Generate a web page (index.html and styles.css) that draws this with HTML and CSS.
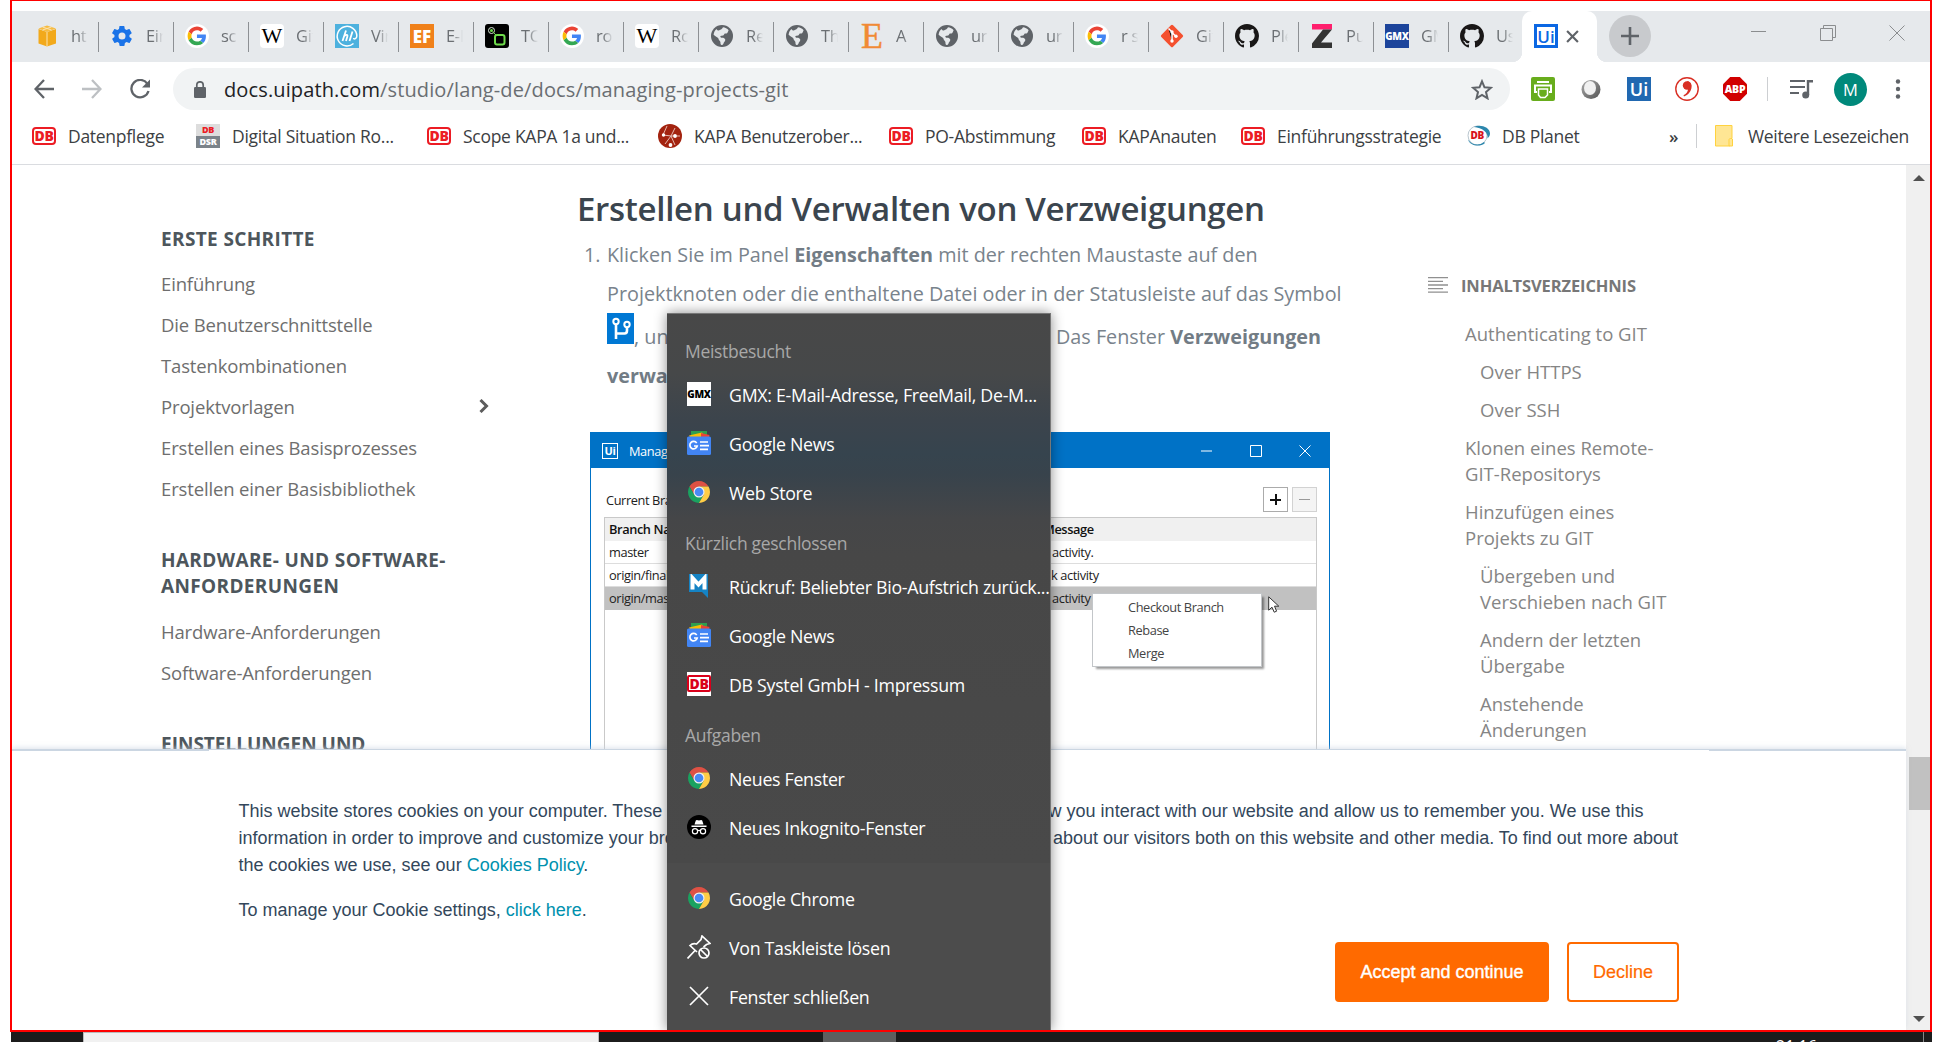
FILE: index.html
```html
<!DOCTYPE html>
<html lang="de">
<head>
<meta charset="utf-8">
<title>Erstellen und Verwalten von Verzweigungen</title>
<link rel="stylesheet" href="styles.css">
</head>
<body>
<svg class="defs" width="0" height="0" aria-hidden="true">
  <symbol id="google" viewBox="0 0 24 24"><ellipse cx="12" cy="12" rx="12" ry="12" fill="#fff"/><g transform="translate(2.6 2.6) scale(.39)"><path fill="#EA4335" d="M24 9.5c3.54 0 6.71 1.22 9.21 3.6l6.85-6.85C35.9 2.38 30.47 0 24 0 14.62 0 6.51 5.38 2.56 13.22l7.98 6.19C12.43 13.72 17.74 9.5 24 9.5z"/><path fill="#4285F4" d="M46.98 24.55c0-1.57-.15-3.09-.38-4.55H24v9.02h12.94c-.58 2.96-2.26 5.48-4.78 7.18l7.73 6c4.51-4.18 7.09-10.36 7.09-17.65z"/><path fill="#FBBC05" d="M10.53 28.59c-.48-1.45-.76-2.99-.76-4.59s.27-3.14.76-4.59l-7.98-6.19C.92 16.46 0 20.12 0 24c0 3.88.92 7.54 2.56 10.78l7.97-6.19z"/><path fill="#34A853" d="M24 48c6.48 0 11.93-2.13 15.89-5.81l-7.73-6c-2.15 1.45-4.92 2.3-8.16 2.3-6.26 0-11.57-4.22-13.47-9.91l-7.98 6.19C6.51 42.62 14.62 48 24 48z"/></g></symbol>
  <symbol id="globe" viewBox="0 0 24 24"><circle cx="12" cy="12" r="11" fill="#5f6368"/><path fill="#e6e9ec" d="M13 3.2c2 .2 4.300 1.200 5.600 3l-1 2.200c-.6 1.200-1.800.8-2.800 1.200-.8.4-.6 1.600-1.600 2-1 .3-2.200-.2-2.800.6-.5.9.6 1.500 1.700 1.500 1.500 0 3 .6 3.200 2.100.1 1.600-1.600 2.200-1.800 3.600-.1.700-.9 1.700-2 1.700-1.300-.200-.9-1.900-1.100-3-.2-1.300-1.800-1.900-1.900-3.300 0-1.200-2.200-1.800-4.900-4.100.2-2.600 1.500-4.600 3-5.800.4 1.300 1.500 1.900 2.700 1.300 1.200-.7 3.200-1.300 3.700-3z"/></symbol>
  <symbol id="github" viewBox="0 0 16 16"><path fill="#191717" d="M8 0C3.58 0 0 3.58 0 8c0 3.54 2.29 6.53 5.47 7.59.4.07.55-.17.55-.38 0-.19-.01-.82-.01-1.49-2.01.37-2.53-.49-2.69-.94-.09-.23-.48-.94-.82-1.13-.28-.15-.68-.52-.01-.53.63-.01 1.08.58 1.23.82.72 1.21 1.87.87 2.33.66.07-.52.28-.87.51-1.07-1.78-.2-3.64-.89-3.64-3.95 0-.87.31-1.59.82-2.15-.08-.2-.36-1.02.08-2.12 0 0 .67-.21 2.2.82.64-.18 1.32-.27 2-.27s1.36.09 2 .27c1.53-1.04 2.2-.82 2.2-.82.44 1.1.16 1.92.08 2.12.51.56.82 1.27.82 2.15 0 3.07-1.87 3.75-3.65 3.95.29.25.54.73.54 1.48 0 1.07-.01 1.93-.01 2.2 0 .21.15.46.55.38A8.01 8.01 0 0 0 16 8c0-4.42-3.58-8-8-8z"/></symbol>
  <symbol id="chrome" viewBox="0 0 48 48"><path fill="#de5144" d="M4.950 13A22 22 0 0 1 43.050 13H24L14.470 29.500z"/><path fill="#1aa260" d="M4.950 13L14.470 29.500 33.530 29.500 24 46A22 22 0 0 1 4.950 13z"/><path fill="#ffcd46" d="M43.050 13A22 22 0 0 1 24 46L33.530 29.500 24 13z"/><circle cx="24" cy="24" r="11" fill="#f1f1f1"/><circle cx="24" cy="24" r="8.700" fill="#4a8af5"/></symbol>
  <symbol id="news" viewBox="0 0 24 24"><path fill="#2f9e4f" d="M4 0h16v8H4z"/><path fill="#fbbc04" d="M2 4.500L15 1.500l3 5H3z"/><path fill="#ea4335" d="M14 2l8.500 2-1 4H14z"/><rect y="5.500" width="24" height="18.500" rx="1.500" fill="#4285f4"/><path d="M9.700 12.100A3.700 3.700 0 1 0 10.200 15H7" fill="none" stroke="#fff" stroke-width="1.700"/><path stroke="#fff" stroke-width="1.700" d="M13 11h8M13 14.700h9M13 18.400h8"/></symbol>
</svg>

<div class="frame">
  <header class="tabstrip">
    <div class="tab"><svg viewBox="0 0 24 24"><path fill="#f2a91b" d="M3.500 5v14.500L12 22.500l9-3V5L12 8z"/><path fill="#f7bc42" d="M3.500 4.500L12 1.500l9 3L12 8z"/><path stroke="#fbe3b0" fill="none" d="M7.500 3l9 3M16.500 3l-9 3M12 8v14.500"/></svg><span>ht</span></div>
    <div class="tab"><svg viewBox="0 0 24 24"><path fill="#1a73e8" d="M19.400 13c0-.3.100-.6.100-1s0-.7-.1-1l2.100-1.600c.2-.2.200-.4.100-.6l-2-3.500c-.1-.2-.4-.3-.6-.2l-2.500 1c-.5-.4-1.100-.7-1.700-1l-.4-2.600c0-.3-.2-.5-.5-.5h-4c-.3 0-.5.200-.5.400L9 5.100c-.6.200-1.200.6-1.700 1l-2.500-1c-.2-.1-.5 0-.6.200l-2 3.500c-.1.200-.1.500.1.600L4.500 11c0 .3-.1.700-.1 1s0 .7.100 1l-2.100 1.600c-.2.200-.2.400-.1.600l2 3.500c.1.200.4.300.6.200l2.500-1c.5.400 1.100.7 1.700 1l.4 2.600c0 .3.200.5.500.5h4c.3 0 .5-.2.500-.4l.4-2.700c.6-.2 1.200-.6 1.700-1l2.500 1c.2.100.5 0 .6-.2l2-3.500c.1-.2.100-.5-.1-.6zM12 15.500a3.500 3.500 0 1 1 0-7 3.500 3.500 0 0 1 0 7z"/></svg><span>Einf</span></div>
    <div class="tab"><svg><use href="#google"/></svg><span>sc</span></div>
    <div class="tab"><i class="fav wiki">W</i><span>Git</span></div>
    <div class="tab"><svg viewBox="0 0 24 24"><path fill="#4db1de" d="M0 0h24v24H0z"/><path fill="none" stroke="#fff" stroke-width="1.500" d="M18.500 19.500A9.800 9.800 0 1 1 21.800 12c0 2.500-2.800 4-3.300 2"/><path fill="none" stroke="#fff" stroke-width="1.800" d="M7.500 17l3.500-10.500M9 12.500c2-2.500 4-2 3.300.3L11 17M14.500 17l3-9.500"/></svg><span>Vir</span></div>
    <div class="tab"><i class="fav ef">EF</i><span>E-L</span></div>
    <div class="tab"><svg viewBox="0 0 24 24"><rect width="24" height="24" rx="3"/><circle cx="6.500" cy="6.500" r="3" fill="none" stroke="#d8e8d8"/><circle cx="6.500" cy="6.500" r="1.500" fill="#6fdc4c"/><path stroke="#6fdc4c" d="M8 8l4 4"/><rect x="10" y="11" width="9.500" height="9.500" rx="2" fill="none" stroke="#6fdc4c" stroke-width="2"/></svg><span>TO</span></div>
    <div class="tab"><svg><use href="#google"/></svg><span>ro</span></div>
    <div class="tab"><i class="fav wiki">W</i><span>Ro</span></div>
    <div class="tab"><svg><use href="#globe"/></svg><span>Re</span></div>
    <div class="tab"><svg><use href="#globe"/></svg><span>Th</span></div>
    <div class="tab"><i class="fav etsy">E</i><span>A</span></div>
    <div class="tab"><svg><use href="#globe"/></svg><span>ur</span></div>
    <div class="tab"><svg><use href="#globe"/></svg><span>ur</span></div>
    <div class="tab"><svg><use href="#google"/></svg><span>r s</span></div>
    <div class="tab"><svg viewBox="0 0 24 24"><rect x="3.700" y="3.700" width="16.600" height="16.600" rx="1.500" transform="rotate(45 12 12)" fill="#f4502f"/><path stroke="#fff" stroke-width="1.500" d="M8.500 4.500L12 8v9M12 8.500l4 4"/><g fill="#fff"><circle cx="12" cy="8" r="1.700"/><circle cx="12" cy="17" r="1.700"/><circle cx="16" cy="12.300" r="1.700"/></g></svg><span>Git</span></div>
    <div class="tab"><svg><use href="#github"/></svg><span>Ple</span></div>
    <div class="tab"><svg viewBox="0 0 24 24"><path fill="#ff1f6d" d="M2 0h20v5.500H2z"/><path fill="#333" d="M13 5.500h9L11 18.500h11V24H2v-4.500z"/></svg><span>Pu</span></div>
    <div class="tab"><i class="fav gmx">GMX</i><span>GM</span></div>
    <div class="tab last"><svg><use href="#github"/></svg><span>Us</span></div>
    <div class="tab active"><i class="fav ui">Ui</i><svg class="x" viewBox="0 0 12 12"><path d="M1 1l10 10M11 1L1 11"/></svg></div>
    <div class="newtab"><svg viewBox="0 0 18 18"><path d="M9 0v18M0 9h18"/></svg></div>
    <div class="winctl"><svg viewBox="0 0 16 16"><path d="M0 6.500h15"/></svg><svg viewBox="0 0 16 16"><path d="M3.500 3.500v-3h12v12h-3M.5 3.500h12v12H.5z"/></svg><svg viewBox="0 0 16 16"><path d="M.5.500l15 15M15.500.500l-15 15"/></svg></div>
  </header>

  <div class="toolbar">
    <svg class="nav" viewBox="0 0 20 20"><path d="M20 10H1.500M10 1L1.500 10l8.500 9"/></svg>
    <svg class="nav dim" viewBox="0 0 20 20"><path d="M0 10h18.500M10 1l8.500 9-8.500 9"/></svg>
    <svg class="nav" viewBox="0 0 20 20"><path d="M17.500 5A8.700 8.700 0 1 0 18.500 12"/><path class="solid" d="M20 .500v8h-8z"/></svg>
    <div class="omnibox">
      <svg class="lock" viewBox="0 0 12 17"><rect y="6" width="12" height="11" rx="1.300" fill="#5f6368"/><path d="M2.800 6V4a3.200 3.200 0 0 1 6.400 0v2" fill="none" stroke="#5f6368" stroke-width="1.700"/></svg>
      <span class="url"><b>docs.uipath.com</b>/studio/lang-de/docs/managing-projects-git</span>
      <svg class="star" viewBox="0 0 22 21"><path d="M11 2.300l2.500 6 6.400.5-4.900 4.200 1.500 6.300L11 15.900l-5.500 3.400L7 13 2.100 8.800l6.400-.5z"/></svg>
    </div>
    <div class="exts">
      <svg viewBox="0 0 24 24"><rect width="24" height="24" rx="2" fill="#68ad1c"/><path fill="none" stroke="#fff" stroke-width="2" d="M6 5h12M6 15H4V8.500h16V15h-2"/><path fill="#68ad1c" stroke="#fff" stroke-width="1.500" d="M7.500 12h9v6L14 20.500H9.500L7.500 18z"/></svg>
      <svg viewBox="0 0 24 24"><defs><linearGradient id="ring" x1="0" y1="0" x2="1" y2="1"><stop stop-color="#aaa"/><stop offset="1" stop-color="#555"/></linearGradient></defs><ellipse cx="12" cy="12.500" rx="9.500" ry="9.500" fill="url(#ring)"/><ellipse cx="11" cy="11" rx="6" ry="7" fill="#f1f1f1"/></svg>
      <i class="fav uiext">Ui</i>
      <svg viewBox="0 0 24 24"><circle cx="12" cy="12" r="11.200" fill="#fff" stroke="#d93025" stroke-width="1.400"/><circle cx="12" cy="8.500" r="4.200" fill="#d93025"/><path fill="#d93025" d="M12 4.300c3.200 0 4.800 2.500 4.600 5.500-.3 4.700-3.400 8.300-7.600 9.700l-.5-1.200c3-1.500 4.700-3.800 4.500-6.800z"/></svg>
      <i class="fav abp">ABP</i>
      <span class="sep"></span>
      <svg viewBox="0 0 24 24"><path d="M1 4h15M1 10h15M1 16h9" stroke="#5f6368" stroke-width="2.200"/><path d="M19 18V4.200h5" fill="none" stroke="#5f6368" stroke-width="2.400"/><circle cx="16.700" cy="18" r="3.500" fill="#5f6368"/></svg>
      <span class="avatar">M</span>
      <svg class="dots" viewBox="0 0 6 20"><circle cx="3" cy="2.500" r="2.200"/><circle cx="3" cy="10" r="2.200"/><circle cx="3" cy="17.500" r="2.200"/></svg>
    </div>
  </div>

  <nav class="bookmarks">
    <a style="width:164px"><i class="db">DB</i>Datenpflege</a>
    <a style="width:231px"><i class="dsr"><em>DB</em><em>DSR</em></i>Digital Situation Ro...</a>
    <a style="width:231px"><i class="db">DB</i>Scope KAPA 1a und...</a>
    <a style="width:231px"><svg viewBox="0 0 24 24"><circle cx="12" cy="12" r="12" fill="#a3230f"/><path stroke="#e6b9b0" fill="none" d="M5 11l8 1 4-8M13 12l4 9M13 12l-6 8M5 11L9 2M13 12l9 0"/><g fill="#fff"><circle cx="5.500" cy="11" r="1.700"/><circle cx="17" cy="12" r="1.900"/><circle cx="12.500" cy="21" r="1.900"/></g></svg>KAPA Benutzerober...</a>
    <a style="width:193px"><i class="db">DB</i>PO-Abstimmung</a>
    <a style="width:159px"><i class="db">DB</i>KAPAnauten</a>
    <a style="width:225px"><i class="db">DB</i>Einführungsstrategie</a>
    <a style="width:203px"><svg viewBox="0 0 24 24"><circle cx="11.500" cy="11.500" r="9.500" fill="#fff" stroke="#b9c6ce"/><path fill="#2c87ad" d="M8 3C14 0 24 3 24 9.500c0 2-1 3.500-2.500 5C22.500 8 16 4 8 3zM2 15.500c3 5 11 7 16 2.500l1 1c-5 4.500-15 3-17-3.500z"/><text x="4.500" y="14.500" class="planet">DB</text></svg>DB Planet</a>
    <span class="more">»</span><span class="sep"></span>
    <svg class="folder" viewBox="0 0 18 22"><path fill="#ffe694" d="M1 0h16v13h-3v8H1z"/><path fill="#ffe694" stroke="#ffd23f" d="M17 13.500h-1.500c-1 0-1.500.5-1.500 1.500v6h3.500v-7zM17 13V.500H.5v20.500h14"/></svg>
    <span class="other">Weitere Lesezeichen</span>
  </nav>

  <main class="page">
    <aside class="side">
      <section><h4>ERSTE SCHRITTE</h4>
        <a>Einführung</a><a>Die Benutzerschnittstelle</a><a>Tastenkombinationen</a>
        <a>Projektvorlagen<svg viewBox="0 0 10 14"><path d="M1.500 1l6 6-6 6"/></svg></a>
        <a>Erstellen eines Basisprozesses</a><a>Erstellen einer Basisbibliothek</a></section>
      <section><h4>HARDWARE- UND SOFTWARE-<br>ANFORDERUNGEN</h4>
        <a>Hardware-Anforderungen</a><a>Software-Anforderungen</a></section>
      <section><h4>EINSTELLUNGEN UND</h4></section>
    </aside>

    <article class="doc">
      <h2>Erstellen und Verwalten von Verzweigungen</h2>
      <div class="step"><span class="num">1.</span>
        <p>Klicken Sie im Panel <b>Eigenschaften</b> mit der rechten Maustaste auf den<br>
        Projektknoten oder die enthaltene Datei oder in der Statusleiste auf das Symbol<br>
        <svg class="branch" viewBox="0 0 27 31"><path fill="#0078d4" d="M0 0h27v31H0z"/><g fill="none" stroke="#fff" stroke-width="2"><circle cx="9" cy="8.500" r="2.700"/><circle cx="20" cy="11.500" r="2.700"/><path stroke-width="2.600" d="M9 11.500V26M9 20.500h8.500c2 0 2.500-1 2.500-3v-3"/></g></svg><span class="gap">, und wählen Sie</span>Das Fenster <b>Verzweigungen</b><br>
        <b>verwalten</b></p>
      </div>
      <div class="shot">
        <div class="shot-title"><i>Ui</i><span>Manage Branches</span>
          <svg viewBox="0 0 12 12"><path d="M0 6h11"/></svg><svg viewBox="0 0 12 12"><path d="M.5.500h11v11H.5z"/></svg><svg viewBox="0 0 12 12"><path d="M.5.500l11 11M11.500.500l-11 11"/></svg></div>
        <div class="shot-bar"><span>Current Branch</span><i class="plus"></i><i class="minus"></i></div>
        <div class="grid">
          <div class="row head"><span>Branch Name</span><span>Message</span></div>
          <div class="row"><span>master</span><span>activity.</span></div>
          <div class="row"><span>origin/final</span><span>k activity</span></div>
          <div class="row sel"><span>origin/master</span><span>activity</span></div>
        </div>
        <div class="popup"><span>Checkout Branch</span><span>Rebase</span><span>Merge</span></div>
        <svg class="cursor" viewBox="0 0 12 18"><path d="M.7.800v13.400l3.300-3 2.200 5 2.400-1-2.100-5h4.300z" fill="#fff" stroke="#333"/></svg>
      </div>
    </article>

    <aside class="toc">
      <h5><svg viewBox="0 0 20 16"><path d="M0 .700h20M0 4.300h15M0 8h20M0 11.600h15M0 15.200h20"/></svg>INHALTSVERZEICHNIS</h5>
      <a>Authenticating to GIT</a><a class="sub">Over HTTPS</a><a class="sub">Over SSH</a>
      <a>Klonen eines Remote-<br>GIT-Repositorys</a><a>Hinzufügen eines<br>Projekts zu GIT</a>
      <a class="sub">Übergeben und<br>Verschieben nach GIT</a><a class="sub">Andern der letzten<br>Übergabe</a>
      <a class="sub">Anstehende<br>Änderungen<br>rückgängig machen</a>
    </aside>

    <div class="scroll"><svg viewBox="0 0 12 6"><path d="M0 6l6-6 6 6z"/></svg><i></i><svg viewBox="0 0 12 6"><path d="M0 0l6 6 6-6z"/></svg></div>

    <section class="cookies">
      <p>This website stores cookies on your computer. These cookies are used to collect information about how you interact with our website and allow us to remember you. We use this<br>information in order to improve and customize your browsing experience and for analytics and metrics about our visitors both on this website and other media. To find out more about<br>the cookies we use, see our <a>Cookies Policy</a>.</p>
      <p>To manage your Cookie settings, <a>click here</a>.</p>
      <div class="btns"><button class="accept">Accept and continue</button><button class="decline">Decline</button></div>
    </section>
  </main>
</div>

<footer class="taskbar"><div class="search"></div><div class="running"></div><span class="clock">21:16</span><i></i></footer>

<div class="jump">
  <h6>Meistbesucht</h6>
  <a><i class="gmxw">GMX</i>GMX: E-Mail-Adresse, FreeMail, De-M...</a>
  <a><svg><use href="#news"/></svg>Google News</a>
  <a><svg><use href="#chrome"/></svg>Web Store</a>
  <h6>Kürzlich geschlossen</h6>
  <a><svg viewBox="0 0 24 24"><path fill="#1583c4" d="M2 0h19v24l-6-6H2z"/><path fill="none" stroke="#fff" stroke-width="4" d="M5.500 15.500V4L11.500 10.500 17.500 4v11.500"/></svg>Rückruf: Beliebter Bio-Aufstrich zurück...</a>
  <a><svg><use href="#news"/></svg>Google News</a>
  <a><i class="dbw"><em>DB</em></i>DB Systel GmbH - Impressum</a>
  <h6>Aufgaben</h6>
  <a><svg><use href="#chrome"/></svg>Neues Fenster</a>
  <a><svg viewBox="0 0 24 24"><circle cx="12" cy="12" r="12"/><path fill="#fff" d="M8.800 5.500l1-.5 2.200.5L14.200 5l1 .5 1.300 4h-9zM4.500 10.500h15v1.500h-15z"/><g fill="none" stroke="#fff" stroke-width="1.200"><circle cx="8" cy="16.200" r="2.600"/><circle cx="16" cy="16.200" r="2.600"/><path d="M10.600 15.700q1.400-.8 2.800 0"/></g></svg>Neues Inkognito-Fenster</a>
  <div class="lower">
    <a><svg><use href="#chrome"/></svg>Google Chrome</a>
    <a><svg viewBox="0 0 24 24" class="line"><path d="M.5 23.500l8-8.500M10 17L3 10.500c2-2 4-2.200 6.500-1.500L14 4.500 15 1l8 7.500-3.500 1L16.500 12"/><circle cx="17" cy="18" r="5"/><path d="M13.500 14.500l7 7"/></svg>Von Taskleiste lösen</a>
    <a><svg viewBox="0 0 24 24" class="line"><path d="M3 3l18 18M21 3L3 21"/></svg>Fenster schließen</a>
  </div>
</div>
</body>
</html>
```
FILE: styles.css
```css
* { box-sizing: border-box; }
body { margin: 0; width: 1942px; height: 1042px; overflow: hidden; position: relative; background: #fff; font-family: "Open Sans", "Noto Sans", sans-serif; }
h2, h4, h5, h6, p { margin: 0; }
i, em { font-style: normal; }
a { white-space: nowrap; }
svg { flex: none; }
.defs { position: absolute; }

.frame { margin-left: 10px; width: 1922px; height: 1032px; border: 2px solid #f00; border-top-width: 1px; display: flex; flex-direction: column; }

/* tab strip */
.tabstrip { margin-top: 10px; height: 51px; background: #e6e9ec; display: flex; padding-left: 12px; }
.tab { width: 75px; height: 51px; padding: 0 0 1px 11px; display: flex; align-items: center; position: relative; flex: none; }
.tab::after { content: ""; position: absolute; right: 0; top: 11px; width: 1.500px; height: 30px; background: #8d9094; }
.tab.last::after, .tab.active::after { display: none; }
.tab > svg, .fav { width: 24px; height: 24px; }
.tab > span { margin-left: 12px; width: 17px; overflow: hidden; white-space: nowrap; font-size: 16.500px; line-height: 24px; color: #6b6f73; letter-spacing: -.3px; -webkit-mask-image: linear-gradient(90deg, #000 40%, transparent); mask-image: linear-gradient(90deg, #000 40%, transparent); }
.fav { display: flex; align-items: center; justify-content: center; flex: none; line-height: 1; }
.wiki { background: #fff; border-radius: 4px; font: 22px "Liberation Serif", serif; color: #000; }
.ef { background: #f0811a; color: #fff; font-weight: 800; font-size: 17px; }
.etsy { font: 36px/24px "Liberation Serif", serif; color: #f18a35; -webkit-text-stroke: .5px #f18a35; }
.gmx { background: #1c449b; color: #fff; font-weight: 800; font-size: 10px; letter-spacing: -.2px; }
.ui { border: 3px solid #0b67e3; background: #fff; color: #0b67e3; font-weight: 600; font-size: 17px; }
.tab.active { background: #fff; border-radius: 10px 10px 0 0; margin-left: -2px; padding-left: 12px; width: 75px; }
.tab.active::before { content: ""; position: absolute; left: -10px; right: -10px; bottom: 0; height: 10px; background: radial-gradient(circle at 0 0, transparent 10px, #fff 10.500px) left / 10px 10px no-repeat, radial-gradient(circle at 100% 0, transparent 10px, #fff 10.500px) right / 10px 10px no-repeat; }
.tab > svg.x { width: 13px; height: 13px; margin-left: 8px; stroke: #5f6368; stroke-width: 2; }
.newtab { width: 42px; height: 42px; border-radius: 50%; background: #c8cacd; margin: 4px 0 0 12px; display: flex; align-items: center; justify-content: center; }
.newtab svg { width: 18px; stroke: #5f6368; stroke-width: 2.600; }
.winctl { margin-left: auto; display: flex; gap: 53px; padding: 14px 25px 0 0; }
.winctl svg { width: 16px; height: 16px; fill: none; stroke: #8b8d8f; }

/* toolbar */
.toolbar { height: 54px; display: flex; align-items: center; padding: 0 28px 0 22px; }
.nav { width: 20px; height: 20px; margin-right: 28px; fill: none; stroke: #5f6368; stroke-width: 2.300; }
.nav.dim { stroke: #bdc0c3; }
.nav + .omnibox { margin-left: -5px; }
.nav .solid { fill: #5f6368; stroke: none; }
.omnibox { width: 1337px; height: 42px; border-radius: 21px; background: #f1f3f4; display: flex; align-items: center; padding: 0 17px 0 21px; }
.lock { width: 12px; height: 17px; }
.url { margin: 0 auto 0 18px; font-size: 20px; letter-spacing: .13px; color: #6a6e72; white-space: nowrap; }
.url b { font-weight: 400; color: #202124; }
.star { width: 22px; fill: none; stroke: #5f6368; stroke-width: 2; }
.exts { display: flex; align-items: center; margin-left: 21px; gap: 24px; flex: 1; }
.exts > svg { width: 24px; height: 24px; }
.uiext { background: #2168b1; color: #fff; font-size: 18px; font-weight: 600; }
.abp { background: #d10000; color: #fff; font-size: 10.500px; letter-spacing: -.3px; font-weight: 800; clip-path: polygon(30% 0, 70% 0, 100% 30%, 100% 70%, 70% 100%, 30% 100%, 0 70%, 0 30%); }
.sep { width: 1px; height: 24px; background: #cdcfd2; margin: 0 -3px 0 -4px; }
.avatar { width: 33px; height: 33px; border-radius: 50%; background: #00897b; color: #fff; font-size: 16.500px; display: flex; align-items: center; justify-content: center; margin-left: -3px; }
.exts .dots { width: 6px; height: 20px; fill: #5f6368; margin-left: 4px; }

/* bookmarks */
.bookmarks { height: 49px; border-bottom: 1px solid #dadce0; display: flex; align-items: center; padding: 0 0 8px 20px; font-size: 17.500px; letter-spacing: -.28px; color: #3c4043; }
.bookmarks > a { display: flex; align-items: center; flex: none; }
.bookmarks > a > svg, .bookmarks > a > i { width: 24px; margin-right: 12px; flex: none; }
.db { height: 18px; border: 2px solid #ec1c24; border-radius: 4px; color: #ec1c24; font-size: 14px; font-weight: 800; line-height: 14px; text-align: center; }
.dsr em { display: block; height: 12px; font-size: 9px; line-height: 12px; font-weight: 800; text-align: center; background: #ddd; color: #ec1c24; }
.dsr em + em { background: #7b838a; color: #fff; }
.planet { font-size: 10px; font-weight: 800; fill: #d8141c; }
.more { width: 12px; font-size: 17px; font-weight: 600; }
.bookmarks .sep { margin: 0 18px 0 15px; }
.folder { width: 18px; height: 22px; margin-right: 15px; }
.other { white-space: nowrap; letter-spacing: -.33px; }

/* page */
.page { flex: 1; position: relative; display: flex; overflow: hidden; background: #fff; }
.side { width: 352px; margin-left: 149px; padding-top: 61px; color: #6e6e6e; flex: none; }
.side section { margin-bottom: 38px; }
.side h4 { font-size: 19px; letter-spacing: .36px; line-height: 26px; font-weight: 700; color: #4d565c; margin-bottom: 12px; white-space: nowrap; }
.side section:first-child h4 { margin-bottom: 11px; }
.side section:last-child h4 { letter-spacing: 0; }
.side a { display: flex; align-items: center; width: 328px; height: 41px; font-size: 18.500px; letter-spacing: -.15px; line-height: 41px; }
.side a svg { margin-left: auto; width: 10px; height: 14px; margin-top: -2px; fill: none; stroke: #5c5c5c; stroke-width: 3; }

.doc { width: 770px; margin-left: 64px; padding-top: 21px; flex: none; }
.doc h2 { font-size: 33px; letter-spacing: -.3px; line-height: 46px; font-weight: 600; color: #3b454e; white-space: nowrap; }
.step { display: flex; margin-top: 3px; font-size: 19.800px; line-height: 39px; color: #79838c; white-space: nowrap; }
.num { width: 30px; padding-left: 7px; flex: none; }
.step b { font-weight: 700; color: #727c85; }
.branch { width: 27px; height: 31px; vertical-align: baseline; }
.gap { display: inline-block; width: 422px; }

.shot { position: relative; width: 740px; height: 400px; margin: 37px 0 0 13px; border: 1px solid #0072c6; font-size: 12.800px; letter-spacing: -.4px; color: #222; }
.shot-title { height: 35px; background: #0072c6; color: #fff; display: flex; align-items: center; padding: 0 18px 0 11px; }
.shot-title i { width: 16px; height: 16px; border: 1.500px solid #fff; font-size: 11px; line-height: 13px; text-align: center; font-weight: 700; }
.shot-title span { margin: 0 auto 0 11px; }
.shot-title svg { width: 12px; height: 12px; margin-left: 37px; fill: none; stroke: #fff; }
.shot-bar { display: flex; height: 49px; padding: 19px 12px 0 15px; gap: 4px; }
.shot-bar span { margin-right: auto; line-height: 26px; }
.shot-bar i { width: 25px; height: 25px; border: 1px solid #ababab; background: linear-gradient(#111, #111) center / 11px 2px no-repeat, linear-gradient(#111, #111) center / 2px 11px no-repeat, #fff; }
.shot-bar i.minus { border-color: #d2d2d2; background: linear-gradient(#999, #999) center / 11px 1px no-repeat, #f4f4f4; }
.grid { margin: 0 12px 0 13px; border: 1.500px solid #c9c9c9; height: 400px; }
.row { display: flex; height: 23px; line-height: 23px; border-bottom: 1px solid #ddd; padding-left: 4px; white-space: nowrap; }
.row span:first-child { width: 443px; }
.row.head { background: #f0f0f0; font-weight: 600; color: #111; border-color: #f0f0f0; }
.row.head span:first-child { width: 434px; }
.row:nth-child(3) span:first-child { width: 442px; }
.row.sel { background: #c1c1c1; border-color: #c1c1c1; }
.popup { position: absolute; left: 501px; top: 160px; width: 170px; height: 74px; background: #fff; border: 1px solid #c3c6c9; box-shadow: 3px 3px 2px -1px rgba(0,0,0,.4); padding: 2px 0 0 35px; display: flex; flex-direction: column; line-height: 23px; color: #444; }
.cursor { position: absolute; left: 677px; top: 163px; width: 12px; height: 18px; }

.toc { margin-left: 81px; padding-top: 108px; color: #858585; font-size: 18.500px; line-height: 26px; }
.toc h5 { display: flex; align-items: center; font-size: 16.500px; letter-spacing: -.12px; line-height: 26px; color: #777; margin: 0 0 22px; }
.toc h5 svg { width: 20px; height: 16px; margin: -2px 13px 0 0; stroke: #909090; stroke-width: 1.300; }
.toc a { display: block; margin: 0 0 12px 37px; }
.toc a.sub { margin-left: 52px; }

.scroll { position: absolute; right: 0; top: 0; width: 24px; height: 865px; background: #f0f0f0; display: flex; flex-direction: column; align-items: center; padding: 10px 0 8px 2px; }
.scroll svg { width: 12px; height: 6px; fill: #505050; }
.scroll i { width: 21px; height: 53px; background: #c1c1c1; margin: 576px 0 auto; }

.cookies { position: absolute; left: 0; right: 24px; top: 584px; bottom: 0; background: #fff; border-top: 1px solid #cbd6e2; box-shadow: 0 -2px 4px rgba(203,214,226,.5); padding: 48px 0 0 226.500px; font: 18px/27px "Liberation Sans", Arial, sans-serif; color: #33475b; white-space: nowrap; }
.cookies::before { content: ""; position: absolute; inset: 0 0 auto; height: 1px; background: linear-gradient(90deg, #cbd6e2 197px, transparent 197px 1697px, #cbd6e2 1697px); }
.cookies p { margin-bottom: 18px; }
.cookies a { color: #0091ae; }
.btns { display: flex; gap: 18px; margin-left: 1096.500px; margin-top: 18px; }
.btns button { height: 60px; border-radius: 4px; border: 2px solid #ff6a00; font: 18px "Liberation Sans", Arial, sans-serif; padding: 0; }
.accept { width: 214px; background: #ff6a00; color: #fff; -webkit-text-stroke: .4px #fff; }
.decline { width: 112px; background: #fff; color: #ff6a00; -webkit-text-stroke: .2px #ff6a00; }

/* taskbar */
.taskbar { margin-left: 11px; height: 10px; width: 1921px; background: #1c1c1c; display: flex; overflow: hidden; }
.search { margin-left: 72px; width: 516px; background: #f1f1f1; border: 1.500px solid #bbb; border-bottom: 0; }
.running { margin-left: 224px; width: 73px; background: #5f5f5f; }
.clock { margin: 4px 0 0 880px; width: 147px; font-size: 16px; line-height: 20px; color: #fff; }
.taskbar i { width: 1px; background: #888; }

/* taskbar jump list */
.jump { position: absolute; left: 667px; top: 313px; width: 384px; height: 717px; border: 1px solid #777; border-width: 1px 1px 0 0; background: linear-gradient(#484848, #464849 60px, #3c444c 105px, #36444e 140px, #38434c 160px, #454648 205px, #474747 240px, #494949 548px); box-shadow: 0 0 12px rgba(0,0,0,.45); clip-path: inset(-14px -14px 0 -14px); color: #fff; font-size: 17.800px; letter-spacing: -.3px; padding-top: 17px; }
.jump h6 { font-size: 17.500px; font-weight: 400; line-height: 41px; height: 39px; padding-left: 18px; color: #a8a8a8; }
.jump h6 ~ h6 { height: 45px; line-height: 52px; }
.jump a { display: flex; align-items: center; height: 49px; padding-left: 20px; }
.jump a > svg, .jump a > i { width: 24px; height: 24px; margin: -2px 18px 0 0; flex: none; }
.gmxw { background: #fff; color: #000; font-size: 10px; font-weight: 800; line-height: 24px; text-align: center; }
.dbw { background: #fff; padding: 3px 0 4px; }
.dbw em { display: block; height: 17px; border: 2px solid #d9001b; border-radius: 2px; color: #d9001b; font-size: 14px; font-weight: 800; line-height: 13px; text-align: center; }
.line { fill: none; stroke: #fff; stroke-width: 1.700; }
.lower { background: #4c4c4c; margin-top: 11px; padding-top: 11px; height: 168px; }
```
